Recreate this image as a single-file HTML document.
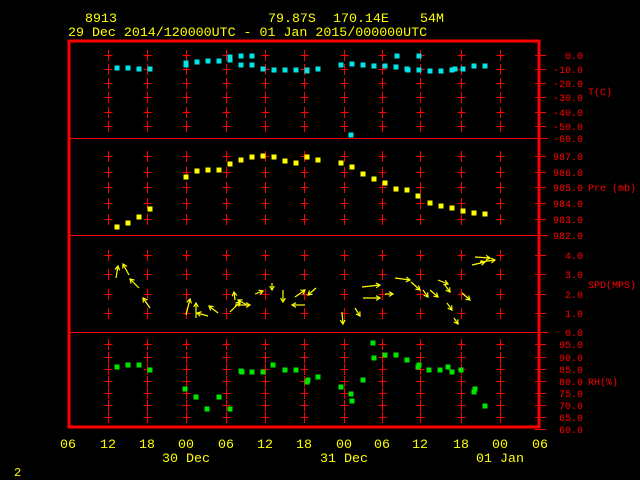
<!DOCTYPE html>
<html><head><meta charset="utf-8"><style>
html,body{margin:0;padding:0;background:#000;width:640px;height:480px;overflow:hidden}
svg{display:block}
text{font-family:"Liberation Mono",monospace}
</style></head><body>
<svg id="s" width="640" height="480" xmlns="http://www.w3.org/2000/svg">
<g fill="#ffff00" font-size="13.3">
<text x="85" y="22">8913</text>
<text x="268" y="22">79.87S</text>
<text x="333" y="22">170.14E</text>
<text x="420" y="22">54M</text>
<text x="68" y="36">29 Dec 2014/120000UTC - 01 Jan 2015/000000UTC</text>
<text x="14" y="476" font-size="12">2</text>
</g>
<g id="grid" stroke="#ff0000" stroke-width="1" fill="none"></g>
<rect x="69" y="41" width="470" height="386" fill="none" stroke="#ff0000" stroke-width="3"/>
<g stroke="#ff0000" stroke-width="1">
<line x1="69" y1="138.5" x2="548" y2="138.5"/>
<line x1="69" y1="235.5" x2="548" y2="235.5"/>
<line x1="69" y1="332.5" x2="548" y2="332.5"/>
</g>
<g id="lab" fill="#ff0000" font-size="10" text-anchor="end"></g>
<g fill="#ff0000" font-size="10">
<text x="588" y="95">T(C)</text>
<text x="588" y="191">Pre (mb)</text>
<text x="588" y="288">SPD(MPS)</text>
<text x="588" y="385">RH(%)</text>
</g>
<g id="pts"></g>
<g id="arr" stroke="#ffff00" stroke-width="1.2" fill="none"></g>
<g id="xl" fill="#ffff00" font-size="13.3" text-anchor="middle"></g>
</svg>
<script>
var NS="http://www.w3.org/2000/svg";
function el(p,t,a,txt){var e=document.createElementNS(NS,t);for(var k in a)e.setAttribute(k,a[k]);if(txt!=null)e.textContent=txt;document.getElementById(p).appendChild(e);}
var cols=[108,147,186,226,265,304,344,382,420,461,500];
var rows=[55,69,83,97,112,126,156,172,187,203,219,255,274,294,313,344,357,369,381,393,405,417];
cols.forEach(function(x){rows.forEach(function(y){
el("grid","line",{x1:x+0.5,y1:y-5,x2:x+0.5,y2:y+6});
el("grid","line",{x1:x-3.5,y1:y+0.5,x2:x+4.5,y2:y+0.5});
});});
var labs=[[55,"0.0"],[69,"-10.0"],[83,"-20.0"],[97,"-30.0"],[112,"-40.0"],[126,"-50.0"],[138,"-60.0"],
[156,"987.0"],[172,"986.0"],[187,"985.0"],[203,"984.0"],[219,"983.0"],[235,"982.0"],
[255,"4.0"],[274,"3.0"],[294,"2.0"],[313,"1.0"],[332,"0.0"],
[344,"95.0"],[357,"90.0"],[369,"85.0"],[381,"80.0"],[393,"75.0"],[405,"70.0"],[417,"65.0"],[429,"60.0"]];
labs.forEach(function(l){el("lab","text",{x:583,y:l[0]+4},l[1]);el("grid","line",{x1:535,y1:l[0]+0.5,x2:546,y2:l[0]+0.5});});
function pts(c,a){a.forEach(function(p){el("pts","rect",{x:p[0]-2.5,y:p[1]-2.5,width:5,height:5,fill:c});});}
pts("#00e5e5",[[117,68],[128,68],[139,69],[150,69],[186,63],[186,65],[197,62],[208,61],[219,61],[230,60],[230,57],[241,56],[252,56],[241,65],[252,65],[263,69],[274,70],[285,70],[296,70],[307,70],[307,71],[318,69],[341,65],[352,64],[363,65],[374,66],[385,66],[396,67],[397,56],[407,69],[408,70],[419,56],[419,70],[430,71],[441,71],[452,70],[455,69],[463,69],[474,66],[485,66],[351,135]]);
pts("#ffff00",[[117,227],[128,223],[139,217],[150,209],[186,177],[197,171],[208,170],[219,170],[230,164],[241,160],[252,157],[263,156],[274,157],[285,161],[296,163],[307,157],[318,160],[341,163],[352,167],[363,174],[374,179],[385,183],[396,189],[407,190],[418,196],[430,203],[441,206],[452,208],[463,211],[474,213],[485,214]]);
pts("#00e600",[[117,367],[128,365],[139,365],[150,370],[185,389],[196,397],[207,409],[219,397],[230,409],[241,371],[242,372],[252,372],[263,372],[273,365],[285,370],[296,370],[307,382],[308,380],[318,377],[341,387],[351,394],[352,401],[363,380],[373,343],[374,358],[385,355],[396,355],[407,360],[418,367],[419,365],[429,370],[440,370],[448,367],[452,372],[461,370],[474,392],[475,389],[485,406]]);
var ar=[[116,278,118,266],[129,275,123,264],[139,288,130,279],[150,308,143,298],[186,315,190,299],[196,318,196,303],[208,316,197,313],[218,313,209,306],[230,312,240,302],[235,305,250,305],[235,300,234,292],[247,305,238,300],[255,294,263,291],[272,283,272,290],[283,290,283,302],[295,297,305,290],[305,305,292,305],[316,288,308,295],[342,312,343,324],[355,308,360,316],[362,287,380,285],[363,298,380,298],[385,294,393,294],[395,278,410,280],[411,282,420,290],[423,290,428,297],[430,290,438,297],[438,280,448,284],[445,285,450,292],[447,303,452,310],[454,318,458,324],[462,293,470,300],[475,257,490,258],[472,265,485,262],[480,262,495,260]];
ar.forEach(function(a){var dx=a[2]-a[0],dy=a[3]-a[1],L=Math.hypot(dx,dy),ux=dx/L,uy=dy/L,h=4;
el("arr","line",{x1:a[0],y1:a[1],x2:a[2],y2:a[3]});
el("arr","path",{d:"M"+(a[2]-h*ux+h*0.6*uy)+" "+(a[3]-h*uy-h*0.6*ux)+"L"+a[2]+" "+a[3]+"L"+(a[2]-h*ux-h*0.6*uy)+" "+(a[3]-h*uy+h*0.6*ux)});});
var xs=[68,108,147,186,226,265,304,344,382,420,461,500,540],xt=["06","12","18","00","06","12","18","00","06","12","18","00","06"];
xs.forEach(function(x,i){el("xl","text",{x:x,y:448},xt[i]);});
el("xl","text",{x:186,y:462},"30 Dec");el("xl","text",{x:344,y:462},"31 Dec");el("xl","text",{x:500,y:462},"01 Jan");
</script>
</body></html>
